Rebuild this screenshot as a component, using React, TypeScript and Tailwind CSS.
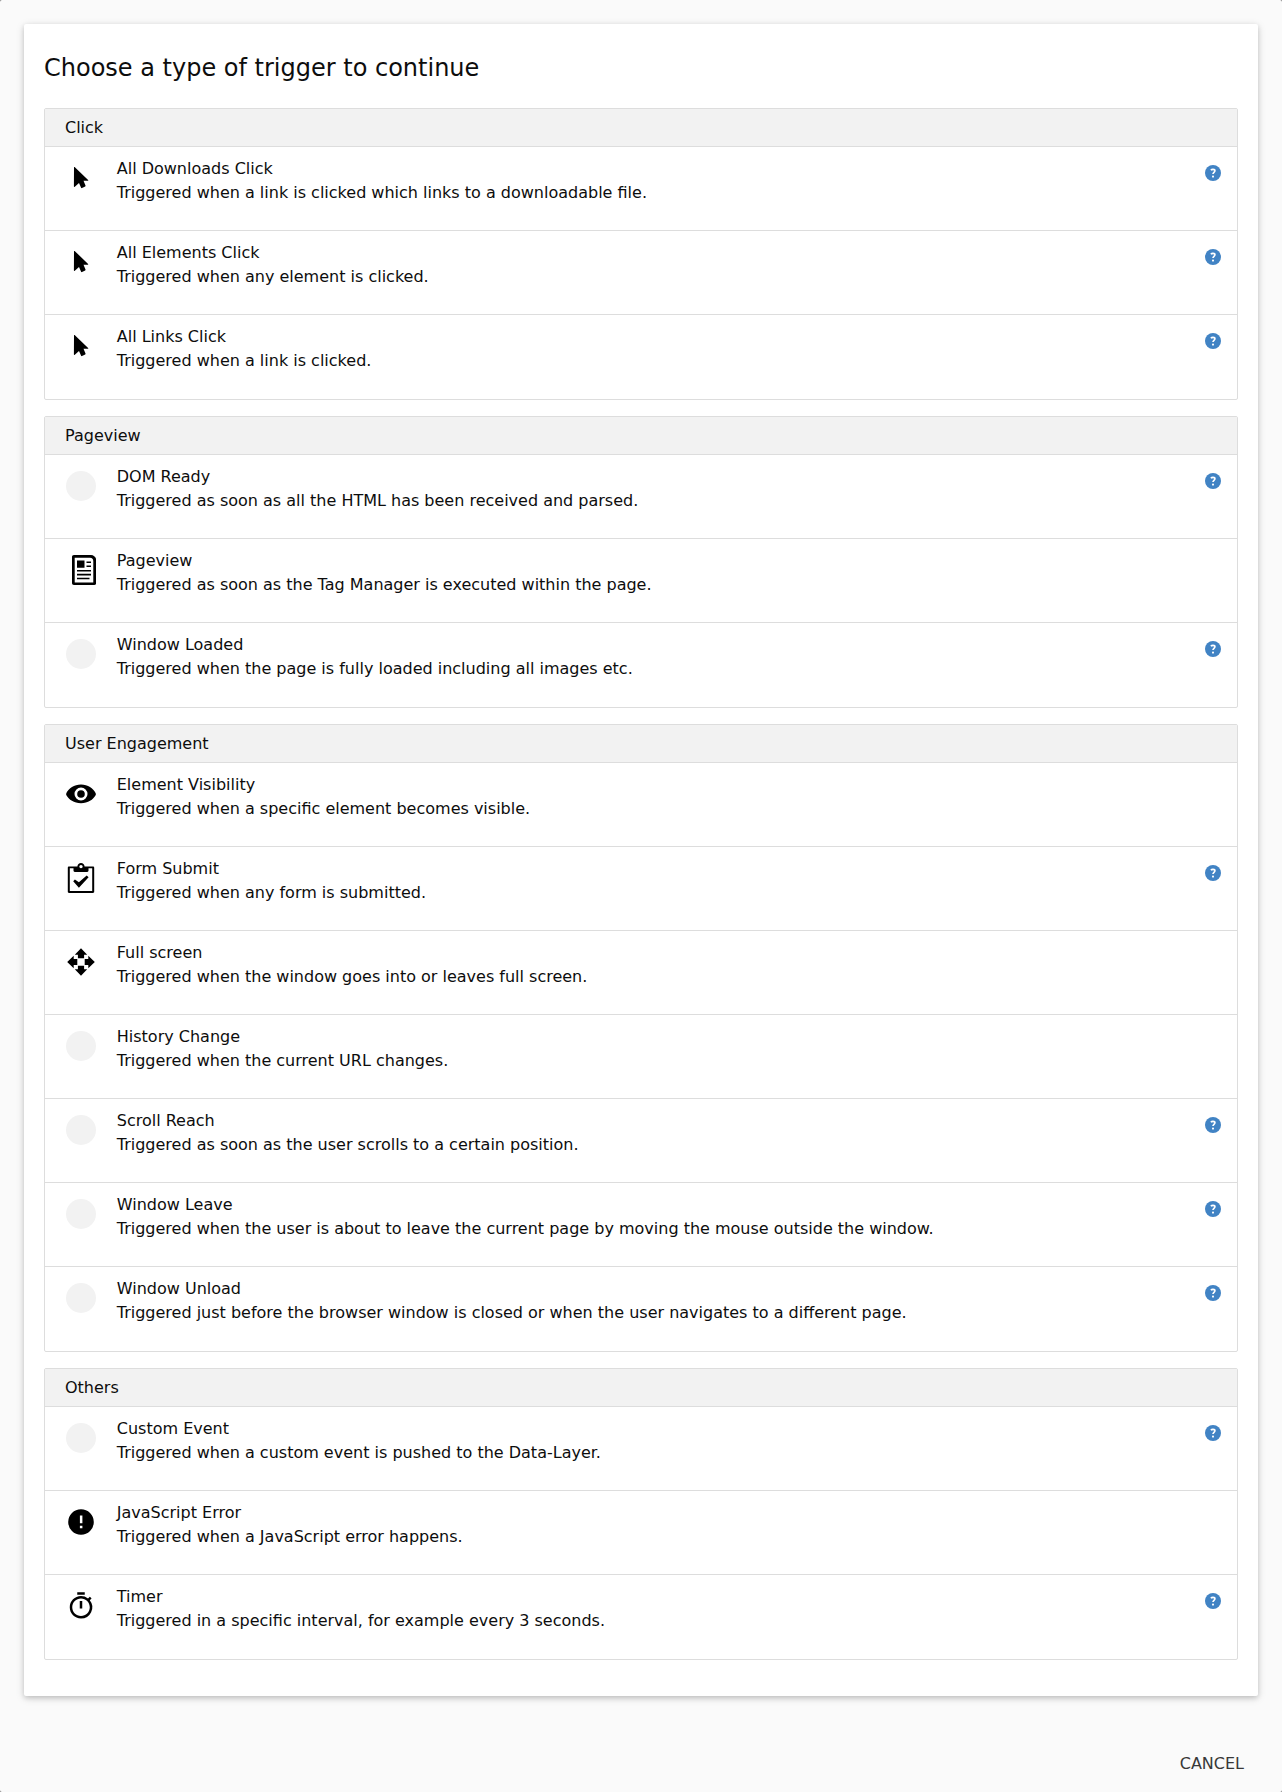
import type { ReactNode } from "react";
import { MdOutlineTimer } from "react-icons/md";

type Trigger = { name: string; description: string; icon?: ReactNode; help?: boolean };
type Category = { name: string; triggers: Trigger[] };

const CursorIcon = () => (
  <svg viewBox="0 0 30 30" className="size-[30px]">
    <path d="M8 4.500c0-.5.5-.6.900-.3L22.100 16.900c.4.400.2.900-.3.900h-4.300l2 4.700c.2.400 0 .7-.3.900l-3.200 1.700c-.4.200-.800 0-.9-.3l-2.100-4.700-4.200 3.700c-.4.300-.9.200-.9-.3z" />
  </svg>
);

const PageIcon = () => (
  <svg viewBox="0 0 30 30" className="size-[30px]">
    <path
      fillRule="evenodd"
      d="M8 0H25C28 0.200 30.200 2.500 30.200 5.200v22.800c0 1.300-.8 2-2 2H8C6.700 30 6 29.200 6 28V2C6 .8 6.700 0 8 0zM8.700 2.700v24.700h18.600V6.200c0-2.200-1.100-3.500-3.300-3.500z"
    />
    <path d="M11 5.600h7.500v7.200H11zM20.500 6.500h4.500v1.600h-4.500zM20.500 10.500h4.500v1.600h-4.500zM11 14.900h14v1.600H11zM11 18.800h14v1.600H11zM11 22.700h12.500v1.600H11z" />
  </svg>
);

const EyeIcon = () => (
  <svg viewBox="0 0 30 30" className="size-[30px]">
    <path
      fillRule="evenodd"
      d="M15 5.400C8 5.400 2.800 9.400.4 13.900c-.4.700-.4 1.700 0 2.400 2.400 4.200 7.600 8 14.600 8s12.200-3.800 14.600-8c.4-.7.4-1.700 0-2.400C27.200 9.400 22 5.400 15 5.400zm0 16.100a6.500 6.500 0 1 1 0-13 6.500 6.500 0 0 1 0 13z"
    />
    <circle cx="15" cy="15" r="3.800" />
  </svg>
);

const ClipboardIcon = () => (
  <svg viewBox="0 0 30 30" className="size-[30px]">
    <path
      fillRule="evenodd"
      d="M3 3.400h8.400C11.600 1.400 13 0 15 0s3.400 1.400 3.600 3.400H27c.7 0 1.200.5 1.200 1.200v24.200c0 .7-.5 1.200-1.200 1.200H3c-.7 0-1.200-.5-1.200-1.200V4.600c0-.7.500-1.200 1.200-1.200zM3.800 5.300v22.800h22.400V5.300h-3.700v2.300c0 .8-.5 1.300-1.300 1.300H8.800c-.8 0-1.300-.5-1.300-1.300V5.300zM15 1.900a1.700 1.700 0 1 0 0 3.400 1.700 1.700 0 0 0 0-3.400z"
    />
    <path d="M7.200 18.300l1.700-1.800 4 2.800 7.800-6.700 1.900 1.700-9.700 10.500z" />
  </svg>
);

const MoveIcon = () => (
  <svg viewBox="0 0 30 30" className="size-[30px]">
    <path d="M15 1.200l6.200 6.500h-3.100v3.600h-6.200V7.700H8.800zM15 28.800l-6.200-6.500h3.100v-3.600h6.200v3.600h3.100zM1.200 15l6.500-6.200v3.100h3.600v6.200H7.700v3.100zM28.800 15l-6.500 6.200v-3.100h-3.600v-6.200h3.600V8.800z" />
  </svg>
);

const ErrorIcon = () => (
  <svg viewBox="0 0 30 30" className="size-[30px]">
    <path
      fillRule="evenodd"
      d="M15 2.200a12.800 12.800 0 1 0 0 25.600 12.800 12.800 0 0 0 0-25.600zM13.900 8.600h2.500v7.600h-2.500zM13.900 18.700h2.500v2.600h-2.500z"
    />
  </svg>
);

const HelpIcon = () => (
  <svg viewBox="0 0 16 16" className="size-4 shrink-0">
    <circle cx="8" cy="8" r="8" fill="#4183c4" />
    <path
      d="M5.900 5.300c.5-.7 1.200-1 2.100-1 1.200 0 1.900.6 1.900 1.500 0 1.500-1.900 1.500-1.900 3.200"
      fill="none"
      stroke="#fff"
      strokeWidth="1.700"
    />
    <circle cx="8" cy="11.600" r="1.050" fill="#fff" />
  </svg>
);

const Placeholder = () => <div className="size-[30px] rounded-full bg-[#f2f2f2]" />;

const categories: Category[] = [
  {
    name: "Click",
    triggers: [
      { name: "All Downloads Click", description: "Triggered when a link is clicked which links to a downloadable file.", icon: <CursorIcon />, help: true },
      { name: "All Elements Click", description: "Triggered when any element is clicked.", icon: <CursorIcon />, help: true },
      { name: "All Links Click", description: "Triggered when a link is clicked.", icon: <CursorIcon />, help: true },
    ],
  },
  {
    name: "Pageview",
    triggers: [
      { name: "DOM Ready", description: "Triggered as soon as all the HTML has been received and parsed.", help: true },
      { name: "Pageview", description: "Triggered as soon as the Tag Manager is executed within the page.", icon: <PageIcon /> },
      { name: "Window Loaded", description: "Triggered when the page is fully loaded including all images etc.", help: true },
    ],
  },
  {
    name: "User Engagement",
    triggers: [
      { name: "Element Visibility", description: "Triggered when a specific element becomes visible.", icon: <EyeIcon /> },
      { name: "Form Submit", description: "Triggered when any form is submitted.", icon: <ClipboardIcon />, help: true },
      { name: "Full screen", description: "Triggered when the window goes into or leaves full screen.", icon: <MoveIcon /> },
      { name: "History Change", description: "Triggered when the current URL changes." },
      { name: "Scroll Reach", description: "Triggered as soon as the user scrolls to a certain position.", help: true },
      { name: "Window Leave", description: "Triggered when the user is about to leave the current page by moving the mouse outside the window.", help: true },
      { name: "Window Unload", description: "Triggered just before the browser window is closed or when the user navigates to a different page.", help: true },
    ],
  },
  {
    name: "Others",
    triggers: [
      { name: "Custom Event", description: "Triggered when a custom event is pushed to the Data-Layer.", help: true },
      { name: "JavaScript Error", description: "Triggered when a JavaScript error happens.", icon: <ErrorIcon /> },
      { name: "Timer", description: "Triggered in a specific interval, for example every 3 seconds.", icon: <MdOutlineTimer className="size-[30px]" />, help: true },
    ],
  },
];

function TriggerRow({ trigger }: { trigger: Trigger }) {
  return (
    <li className="flex h-[84px] items-start border-b border-[#ddd] pr-4 pl-[21px] last:border-b-0">
      <div className="mt-4 size-[30px] shrink-0 text-black">{trigger.icon ?? <Placeholder />}</div>
      <div className="ml-[20.75px] flex-1 pt-2.5">
        <h4>{trigger.name}</h4>
        <p>{trigger.description}</p>
      </div>
      {trigger.help && (
        <button type="button" aria-label={"Help: " + trigger.name} className="mt-[18px]">
          <HelpIcon />
        </button>
      )}
    </li>
  );
}

export default function App() {
  return (
    <div className="h-[1792px] w-full bg-[#777]">
      <div className="flex h-full flex-col rounded-[2px] bg-[#fafafa] px-6 pt-6 font-['DejaVu_Sans',sans-serif] text-base leading-6 text-[#0d0d0d]">
        <main className="h-[1672px] shrink-0 rounded-[2px] bg-white px-5 pt-7 shadow-[0_2px_5px_0_rgba(0,0,0,0.16),0_2px_10px_0_rgba(0,0,0,0.12)]">
          <h2 className="mb-6 text-2xl leading-8">Choose a type of trigger to continue</h2>
          <div className="flex flex-col gap-4">
            {categories.map((category) => (
              <section key={category.name} className="rounded-[2px] border border-[#ddd]">
                <h3 className="h-[38px] border-b border-[#ddd] bg-[#f2f2f2] px-5 pt-[7px]">{category.name}</h3>
                <ul>
                  {category.triggers.map((trigger) => (
                    <TriggerRow key={trigger.name} trigger={trigger} />
                  ))}
                </ul>
              </section>
            ))}
          </div>
        </main>
        <button type="button" className="mt-14 mr-[14px] self-end text-[#383838]">
          CANCEL
        </button>
      </div>
    </div>
  );
}
